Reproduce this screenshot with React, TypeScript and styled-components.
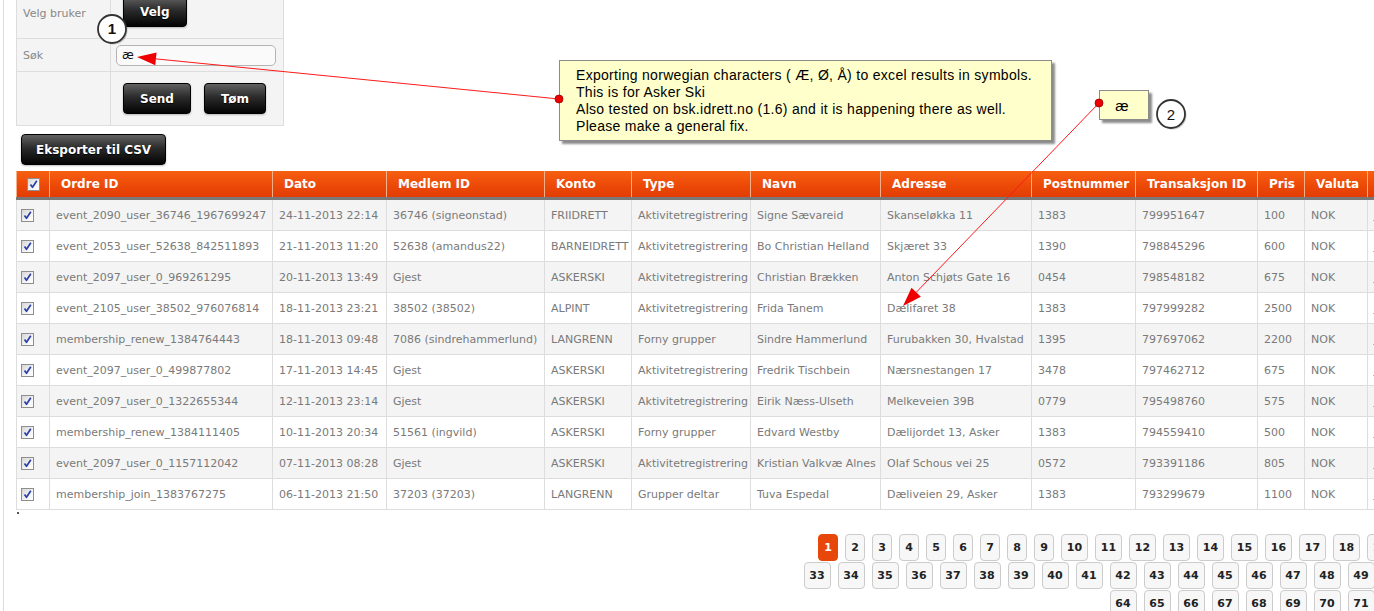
import React from "react";
import styled, { createGlobalStyle } from "styled-components";

const Global = createGlobalStyle`
  html, body { margin: 0; padding: 0; overflow: hidden; background: #fff; }
  body { font-family: "DejaVu Sans", Verdana, sans-serif; }
`;

const Viewport = styled.div`
  position: relative;
  width: 1374px;
  height: 611px;
  overflow: hidden;
`;

const Page = styled.div`
  margin-left: 3px;
  margin-top: -16px;
  border-left: 1px solid #dcdcdc;
  padding-left: 12px;
  min-height: 700px;
`;

const FormTable = styled.table`
  border-collapse: collapse;
  width: 268px;
  background: #f4f4f4;
`;

const FormRow = styled.tr<{ $h: number }>`
  height: ${(p) => p.$h}px;
`;

const LabelCell = styled.td<{ $top?: number }>`
  border: 1px solid #dddddd;
  padding: ${(p) => p.$top ?? 0}px 6px 0;
  font-size: 11px;
  color: #888;
  vertical-align: middle;
`;

const FieldCell = styled.td<{ $pad: number }>`
  border: 1px solid #dddddd;
  padding: 0 6px 0 ${(p) => p.$pad}px;
  vertical-align: middle;
`;

const ButtonRow = styled.div`
  display: flex;
  gap: 13px;
`;

const DarkButton = styled.button`
  height: 31px;
  padding: 0 16px;
  border: 1px solid #000;
  border-radius: 4px;
  background: linear-gradient(to bottom, #616161 0%, #2b2b2b 45%, #030303 100%);
  color: #fff;
  font: bold 12px "DejaVu Sans", Verdana, sans-serif;
  text-shadow: 0 1px 1px #000;
  box-shadow: 0 1px 2px rgba(0, 0, 0, 0.25);
  cursor: pointer;
`;

const ExportButton = styled(DarkButton)`
  display: block;
  margin: 8px 0 0 5px;
  padding: 0 14px;
`;

const SearchInput = styled.input`
  box-sizing: border-box;
  width: 160px;
  height: 21px;
  border: 1px solid #b5b5b5;
  border-radius: 5px;
  background: #fafafa;
  padding: 0 5px;
  font: 12px "DejaVu Sans", Verdana, sans-serif;
  color: #111;
  outline: none;
`;

const Grid = styled.table`
  border-collapse: collapse;
  table-layout: fixed;
  margin-top: 6px;
  width: 1451px;
`;

const HeadCell = styled.th<{ $center?: boolean }>`
  height: 26px;
  padding: 0 ${(p) => (p.$center ? 0 : 11)}px;
  text-align: ${(p) => (p.$center ? "center" : "left")};
  background: linear-gradient(to bottom, #f65f10 0%, #ec4a08 55%, #e23c04 100%);
  color: #fff;
  font: bold 12px "DejaVu Sans", Verdana, sans-serif;
  white-space: nowrap;
  overflow: hidden;
  border-left: 1px solid #f8b08a;
  border-right: 1px solid #f8b08a;
  border-bottom: 3px solid #787878;
  vertical-align: middle;
`;

const BodyRow = styled.tr`
  &:nth-child(odd) { background: #f4f4f4; }
  &:nth-child(even) { background: #ffffff; }
`;

const Cell = styled.td<{ $check?: boolean }>`
  height: 30px;
  padding: 0 ${(p) => (p.$check ? "0 0 4px" : "6px")};
  border: 1px solid #dddddd;
  font-size: 11px;
  color: #7a7a7a;
  white-space: nowrap;
  overflow: hidden;
  vertical-align: middle;
`;

const CheckBox = styled.span`
  display: inline-block;
  width: 13px;
  height: 13px;
  box-sizing: border-box;
  border: 1px solid #8e8e8e;
  background: linear-gradient(135deg, #d6d6d6 0%, #f4f4f4 60%, #ffffff 100%);
  vertical-align: middle;
  line-height: 0;
`;

const Tick = styled.div`
  width: 2px;
  height: 2px;
  margin: 2px 0 0 1px;
  background: #555;
`;

const Pager = styled.div`
  display: flex;
  flex-wrap: wrap;
  justify-content: center;
  gap: 1px 7px;
  width: 1050px;
  margin: 20px 0 0 786px;
`;

const PageButton = styled.span<{ $active?: boolean; $wide?: boolean }>`
  box-sizing: border-box;
  width: ${(p) => (p.$wide ? 27 : 20)}px;
  height: 27px;
  display: inline-flex;
  align-items: center;
  justify-content: center;
  border: 1px solid ${(p) => (p.$active ? "#e8470b" : "#cccccc")};
  border-radius: 4px;
  background: ${(p) => (p.$active ? "#e8470b" : "#f7f7f7")};
  color: ${(p) => (p.$active ? "#fff" : "#222")};
  font: bold 11px "DejaVu Sans", Verdana, sans-serif;
`;

const Note = styled.div`
  position: absolute;
  left: 559px;
  top: 60px;
  width: 493px;
  height: 81px;
  box-sizing: border-box;
  border: 1px solid #8c8c8c;
  background: #ffffcc;
  box-shadow: 3px 3px 2px rgba(0, 0, 0, 0.45);
  padding: 6px 0 0 16px;
  font: 14px/17px "Liberation Sans", Arial, sans-serif;
  letter-spacing: 0.3px;
  white-space: nowrap;
  color: #000;
`;

const SmallNote = styled.div`
  position: absolute;
  left: 1099px;
  top: 90px;
  width: 50px;
  height: 30px;
  box-sizing: border-box;
  border: 1px solid #8c8c8c;
  background: #ffffcc;
  box-shadow: 3px 3px 2px rgba(0, 0, 0, 0.45);
  display: flex;
  align-items: center;
  justify-content: center;
  padding-right: 4px;
  font: 15px "Liberation Sans", Arial, sans-serif;
  color: #000;
`;

const Overlay = styled.svg`
  position: absolute;
  left: 0;
  top: 0;
  pointer-events: none;
`;

const cols = [33, 223, 114, 158, 87, 119, 130, 151, 104, 122, 47, 63, 100];
const heads = [
  "Ordre ID",
  "Dato",
  "Medlem ID",
  "Konto",
  "Type",
  "Navn",
  "Adresse",
  "Postnummer",
  "Transaksjon ID",
  "Pris",
  "Valuta",
  "Status",
];

const rows: string[][] = [
  ["event_2090_user_36746_1967699247", "24-11-2013 22:14", "36746 (signeonstad)", "FRIIDRETT", "Aktivitetregistrering", "Signe Sævareid", "Skanseløkka 11", "1383", "799951647", "100", "NOK", "Ja"],
  ["event_2053_user_52638_842511893", "21-11-2013 11:20", "52638 (amandus22)", "BARNEIDRETT", "Aktivitetregistrering", "Bo Christian Helland", "Skjæret 33", "1390", "798845296", "600", "NOK", "Ja"],
  ["event_2097_user_0_969261295", "20-11-2013 13:49", "Gjest", "ASKERSKI", "Aktivitetregistrering", "Christian Brækken", "Anton Schjøts Gate 16", "0454", "798548182", "675", "NOK", "Ja"],
  ["event_2105_user_38502_976076814", "18-11-2013 23:21", "38502 (38502)", "ALPINT", "Aktivitetregistrering", "Frida Tanem", "Dælifaret 38", "1383", "797999282", "2500", "NOK", "Ja"],
  ["membership_renew_1384764443", "18-11-2013 09:48", "7086 (sindrehammerlund)", "LANGRENN", "Forny grupper", "Sindre Hammerlund", "Furubakken 30, Hvalstad", "1395", "797697062", "2200", "NOK", "Ja"],
  ["event_2097_user_0_499877802", "17-11-2013 14:45", "Gjest", "ASKERSKI", "Aktivitetregistrering", "Fredrik Tischbein", "Nærsnestangen 17", "3478", "797462712", "675", "NOK", "Ja"],
  ["event_2097_user_0_1322655344", "12-11-2013 23:14", "Gjest", "ASKERSKI", "Aktivitetregistrering", "Eirik Næss-Ulseth", "Melkeveien 39B", "0779", "795498760", "575", "NOK", "Ja"],
  ["membership_renew_1384111405", "10-11-2013 20:34", "51561 (ingvild)", "ASKERSKI", "Forny grupper", "Edvard Westby", "Dælijordet 13, Asker", "1383", "794559410", "500", "NOK", "Ja"],
  ["event_2097_user_0_1157112042", "07-11-2013 08:28", "Gjest", "ASKERSKI", "Aktivitetregistrering", "Kristian Valkvæ Alnes", "Olaf Schous vei 25", "0572", "793391186", "805", "NOK", "Ja"],
  ["membership_join_1383767275", "06-11-2013 21:50", "37203 (37203)", "LANGRENN", "Grupper deltar", "Tuva Espedal", "Dæliveien 29, Asker", "1383", "793299679", "1100", "NOK", "Ja"],
];

const pages = Array.from({ length: 76 }, (_, i) => i + 1);

function Check() {
  return (
    <CheckBox>
      <svg width="11" height="11" viewBox="0 0 11 11">
        <path d="M2.5 5.5 L4.5 8.3 L8.8 1.8" fill="none" stroke="#2b3fa8" strokeWidth="1.7" strokeLinejoin="round" />
      </svg>
    </CheckBox>
  );
}

function arrow(fx: number, fy: number, tx: number, ty: number, len = 19, half = 6.5) {
  const dx = tx - fx;
  const dy = ty - fy;
  const d = Math.hypot(dx, dy);
  const ux = dx / d;
  const uy = dy / d;
  const bx = tx - ux * len;
  const by = ty - uy * len;
  const px = -uy * half;
  const py = ux * half;
  return {
    base: [bx, by],
    points: `${tx},${ty} ${bx + px},${by + py} ${bx - px},${by - py}`,
  };
}

function Annotations() {
  const a1 = arrow(559, 99, 137, 57);
  const a2 = arrow(1099, 103, 903, 306);
  return (
    <Overlay width={1374} height={611}>
      <line x1={559} y1={99} x2={a1.base[0]} y2={a1.base[1]} stroke="#ff1a1a" strokeWidth={1} />
      <polygon points={a1.points} fill="#ee0000" />
      <circle cx={559} cy={99} r={4} fill="#ee0000" stroke="#a00000" strokeWidth={0.8} />
      <line x1={1099} y1={103} x2={a2.base[0]} y2={a2.base[1]} stroke="#ff1a1a" strokeWidth={1} />
      <polygon points={a2.points} fill="#ee0000" />
      <circle cx={1099} cy={103} r={4} fill="#ee0000" stroke="#a00000" strokeWidth={0.8} />

      <circle cx={113.5} cy={30.5} r={14} fill="rgba(0,0,0,0.2)" />
      <circle cx={112} cy={29} r={14} fill="#fff" stroke="#333" strokeWidth={1.8} />
      <text x={112} y={34} textAnchor="middle" fontFamily="Liberation Sans, Arial, sans-serif" fontWeight="bold" fontSize={15} fill="#111">1</text>

      <circle cx={1172.5} cy={115.5} r={14} fill="rgba(0,0,0,0.2)" />
      <circle cx={1171} cy={114} r={14} fill="#fff" stroke="#333" strokeWidth={1.8} />
      <text x={1171} y={119.5} textAnchor="middle" fontFamily="Liberation Sans, Arial, sans-serif" fontSize={15} fill="#111">2</text>
    </Overlay>
  );
}

export default function App() {
  return (
    <Viewport>
      <Global />
      <Page>
        <FormTable>
          <colgroup>
            <col style={{ width: 95 }} />
            <col style={{ width: 173 }} />
          </colgroup>
          <tbody>
            <FormRow $h={54}>
              <LabelCell $top={4}>Velg bruker</LabelCell>
              <FieldCell $pad={12}>
                <DarkButton>Velg</DarkButton>
              </FieldCell>
            </FormRow>
            <FormRow $h={33}>
              <LabelCell>Søk</LabelCell>
              <FieldCell $pad={5}>
                <SearchInput defaultValue="æ" />
              </FieldCell>
            </FormRow>
            <FormRow $h={54}>
              <LabelCell />
              <FieldCell $pad={12}>
                <ButtonRow>
                  <DarkButton>Send</DarkButton>
                  <DarkButton>Tøm</DarkButton>
                </ButtonRow>
              </FieldCell>
            </FormRow>
          </tbody>
        </FormTable>

        <ExportButton>Eksporter til CSV</ExportButton>

        <Grid>
          <colgroup>
            {cols.map((w, i) => (
              <col key={i} style={{ width: w }} />
            ))}
          </colgroup>
          <thead>
            <tr>
              <HeadCell $center>
                <Check />
              </HeadCell>
              {heads.map((h) => (
                <HeadCell key={h}>{h}</HeadCell>
              ))}
            </tr>
          </thead>
          <tbody>
            {rows.map((r) => (
              <BodyRow key={r[0]}>
                <Cell $check>
                  <Check />
                </Cell>
                {r.map((v, i) => (
                  <Cell key={i}>{v}</Cell>
                ))}
              </BodyRow>
            ))}
          </tbody>
        </Grid>

        <Tick />

        <Pager>
          {pages.map((n) => (
            <PageButton key={n} $active={n === 1} $wide={n > 9}>
              {n}
            </PageButton>
          ))}
        </Pager>
      </Page>

      <Note>
        Exporting norwegian characters ( Æ, Ø, Å) to excel results in symbols.
        <br />
        This is for Asker Ski
        <br />
        Also tested on bsk.idrett.no (1.6) and it is happening there as well.
        <br />
        Please make a general fix.
      </Note>
      <SmallNote>æ</SmallNote>
      <Annotations />
    </Viewport>
  );
}
